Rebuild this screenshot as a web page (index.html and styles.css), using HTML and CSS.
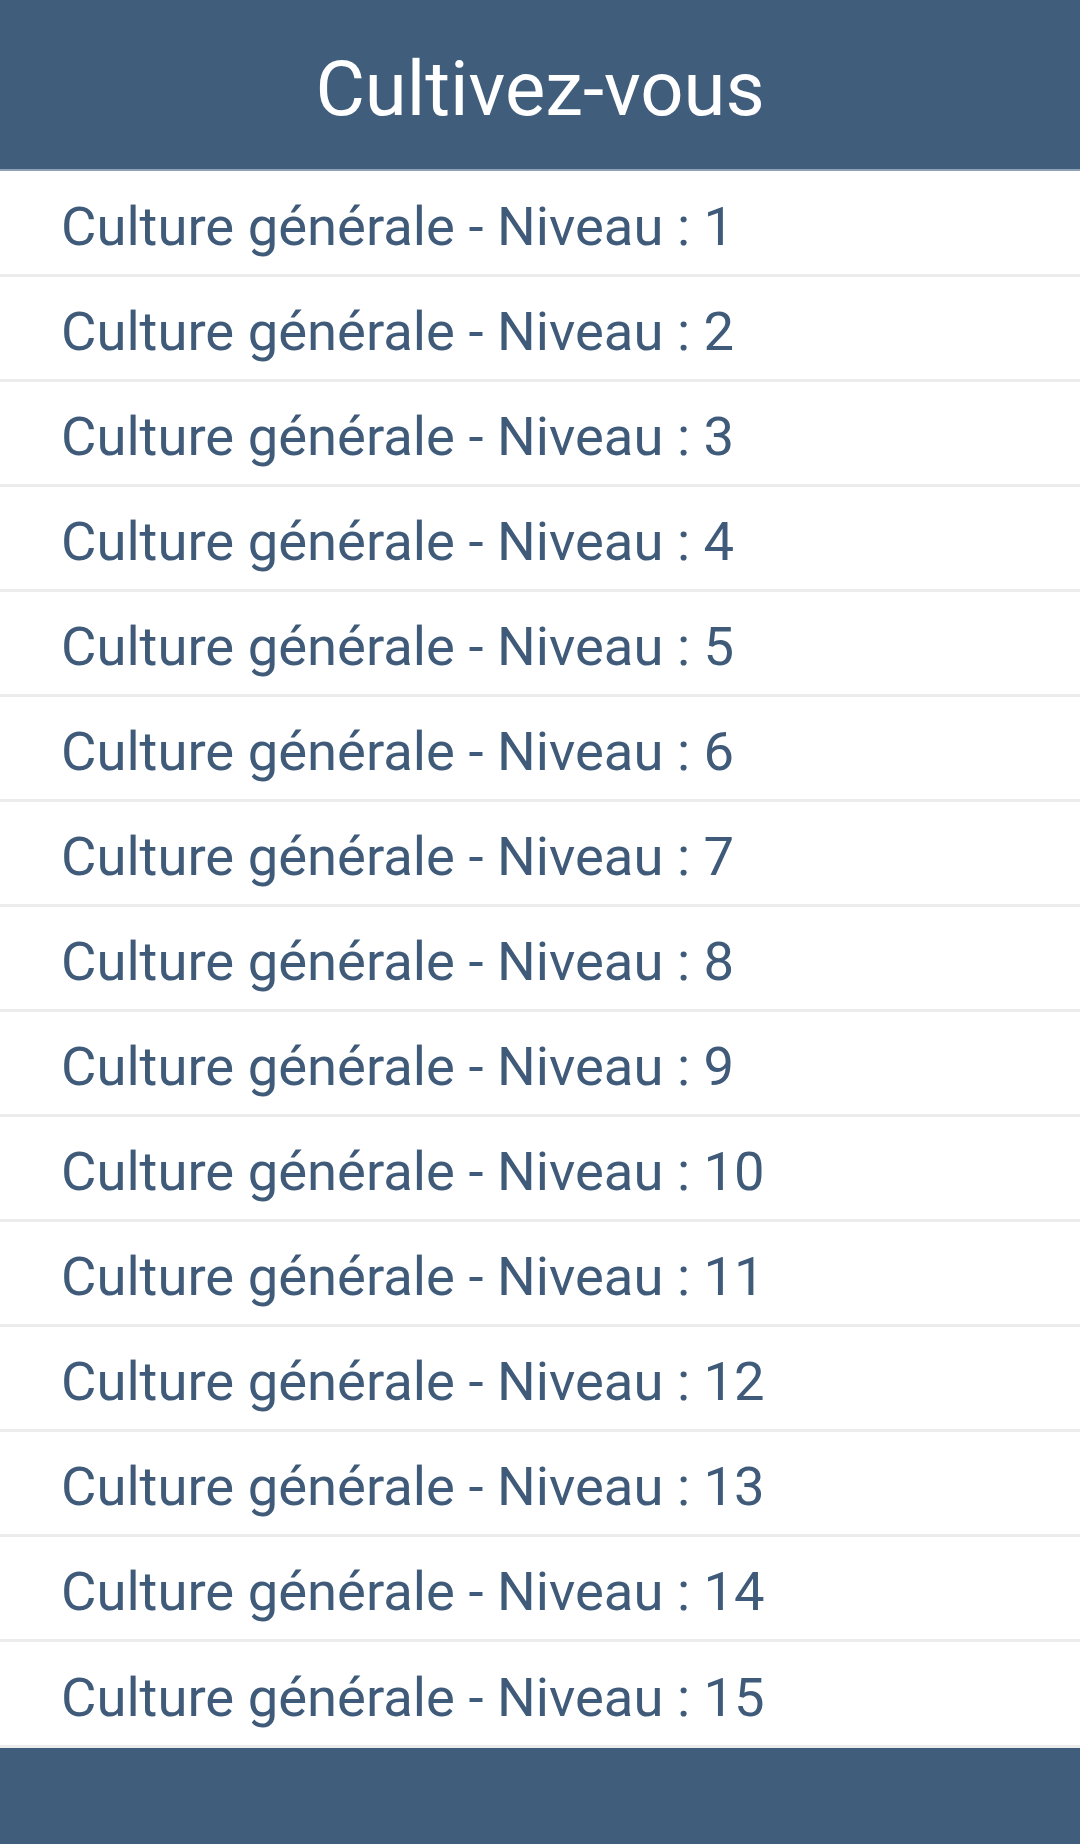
FILE: index.html
```html
<!DOCTYPE html>
<html lang="fr">
<head>
<meta charset="utf-8">
<title>Cultivez-vous</title>
<link rel="stylesheet" href="styles.css">
</head>
<body>
<div class="app">
  <header class="topbar"><h1 class="title">Cultivez-vous</h1></header>
  <ul class="levels">
    <li class="level">Culture générale - Niveau : 1</li>
    <li class="level">Culture générale - Niveau : 2</li>
    <li class="level">Culture générale - Niveau : 3</li>
    <li class="level">Culture générale - Niveau : 4</li>
    <li class="level">Culture générale - Niveau : 5</li>
    <li class="level">Culture générale - Niveau : 6</li>
    <li class="level">Culture générale - Niveau : 7</li>
    <li class="level">Culture générale - Niveau : 8</li>
    <li class="level">Culture générale - Niveau : 9</li>
    <li class="level">Culture générale - Niveau : 10</li>
    <li class="level">Culture générale - Niveau : 11</li>
    <li class="level">Culture générale - Niveau : 12</li>
    <li class="level">Culture générale - Niveau : 13</li>
    <li class="level">Culture générale - Niveau : 14</li>
    <li class="level">Culture générale - Niveau : 15</li>
  </ul>
  <footer class="bottombar"></footer>
</div>
</body>
</html>
```
FILE: styles.css
```css
html, body {
  margin: 0;
  padding: 0;
  background: #ffffff;
}
body {
  font-family: Roboto, "Noto Sans", sans-serif;
}
.app {
  width: 1080px;
  height: 1844px;
  display: flex;
  flex-direction: column;
  overflow: hidden;
}
.topbar {
  height: 160px;
  padding-top: 9px;
  background: #405e7c;
  border-bottom: 2px solid #8da2b6;
  display: flex;
  align-items: center;
  justify-content: center;
  flex-shrink: 0;
}
.title {
  margin: 0;
  font-weight: 400;
  font-size: 76px;
  color: #ffffff;
  line-height: 1;
}
.levels {
  list-style: none;
  margin: 0;
  padding: 0;
  flex-shrink: 0;
}
.level {
  height: 95px;
  padding-top: 7px;
  border-bottom: 3px solid #ececec;
  display: flex;
  align-items: center;
  padding-left: 61px;
  font-size: 54.4px;
  color: #3f5b79;
}
.level:first-child,
.level:last-child {
  height: 96px;
}
.bottombar {
  flex: 1;
  background: #405e7c;
}
```
